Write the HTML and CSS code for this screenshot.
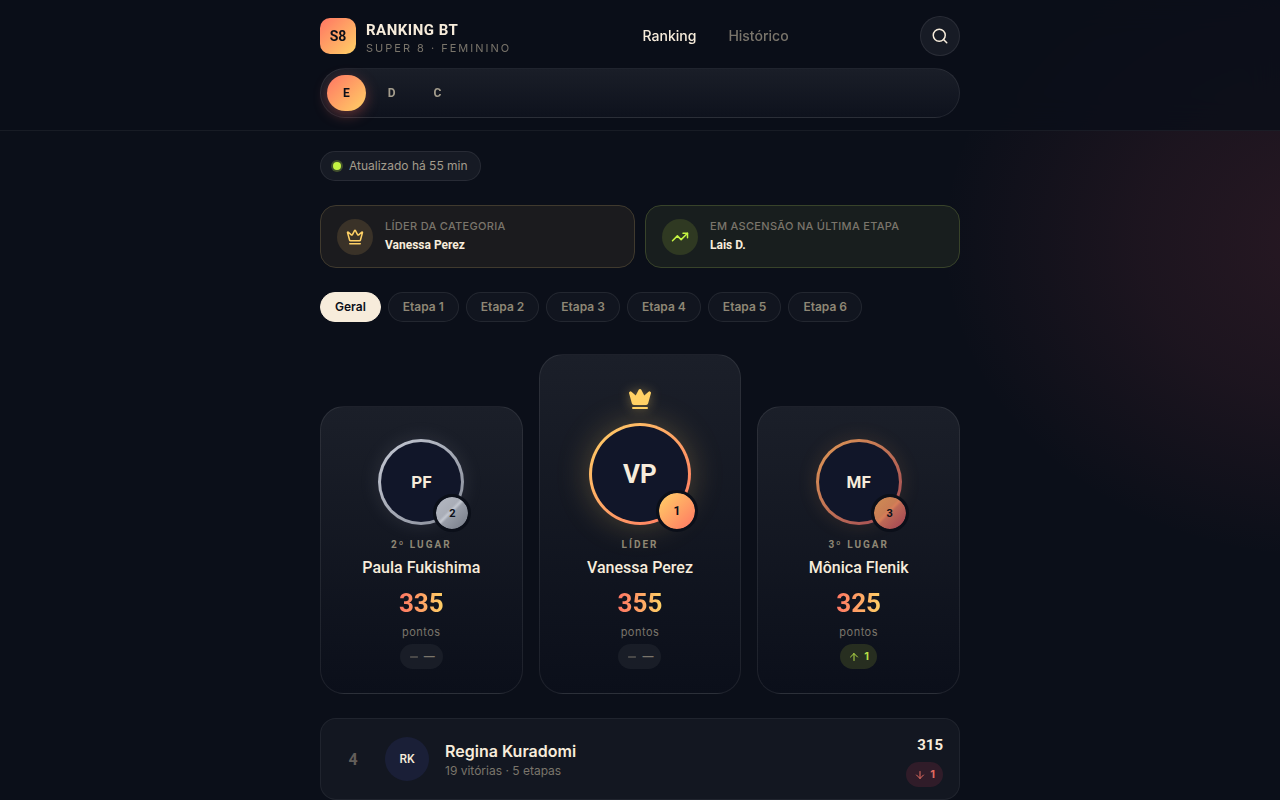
FILE: index.html
```html
<!DOCTYPE html>
<html lang="pt-BR">
<head>
    <meta charset="UTF-8">
    <meta name="viewport" content="width=device-width, initial-scale=1.0">
    <title>Ranking BT</title>
    <link rel="stylesheet" href="styles.css">
</head>
<body>
    <header class="header">
        <div class="container">
            <div class="topbar">
                <div class="brand">
                    <span class="logo">S8</span>
                    <div>
                        <div class="brand-name">RANKING BT</div>
                        <div class="brand-sub">SUPER 8 · FEMININO</div>
                    </div>
                </div>
                <nav class="nav">
                    <a href="#" class="active">Ranking</a>
                    <a href="#">Histórico</a>
                </nav>
                <button class="search" aria-label="Buscar">
                    <svg class="icon" width="18" height="18" viewBox="0 0 24 24"><circle cx="11" cy="11" r="8"/><path d="m21 21-4.3-4.3"/></svg>
                </button>
            </div>
            <div class="categories">
                <button class="active">E</button>
                <button>D</button>
                <button>C</button>
            </div>
        </div>
    </header>

    <main class="container main">
        <div class="updated"><span class="dot"></span>Atualizado há 55 min</div>

        <section class="highlights">
            <div class="highlight gold">
                <span class="highlight-icon">
                    <svg class="icon" width="18" height="18" viewBox="0 0 24 24"><path d="M11.562 3.266a.5.5 0 0 1 .876 0L15.39 8.87a1 1 0 0 0 1.516.294L21.183 5.5a.5.5 0 0 1 .798.519l-2.834 10.246a1 1 0 0 1-.956.734H5.81a1 1 0 0 1-.957-.734L2.02 6.02a.5.5 0 0 1 .798-.519l4.276 3.664a1 1 0 0 0 1.516-.294z"/><path d="M5 21h14"/></svg>
                </span>
                <div>
                    <div class="highlight-label">LÍDER DA CATEGORIA</div>
                    <div class="highlight-name">Vanessa Perez</div>
                </div>
            </div>
            <div class="highlight lime">
                <span class="highlight-icon">
                    <svg class="icon" width="18" height="18" viewBox="0 0 24 24"><path d="m22 7-8.5 8.5-5-5L2 17"/><path d="M16 7h6v6"/></svg>
                </span>
                <div>
                    <div class="highlight-label">EM ASCENSÃO NA ÚLTIMA ETAPA</div>
                    <div class="highlight-name">Lais D.</div>
                </div>
            </div>
        </section>

        <div class="stages">
            <button class="active">Geral</button>
            <button>Etapa 1</button>
            <button>Etapa 2</button>
            <button>Etapa 3</button>
            <button>Etapa 4</button>
            <button>Etapa 5</button>
            <button>Etapa 6</button>
        </div>

        <section class="podium">
            <article class="card second">
                <div class="avatar"><span class="initials">PF</span><span class="badge">2</span></div>
                <div class="place">2º LUGAR</div>
                <div class="name">Paula Fukishima</div>
                <div class="points">335</div>
                <div class="unit">pontos</div>
                <span class="delta"><svg class="icon" width="12" height="12" viewBox="0 0 24 24"><path d="M5 12h14"/></svg>—</span>
            </article>
            <article class="card first">
                <svg class="crown" width="24" height="24" viewBox="0 0 24 24"><path d="M11.562 3.266a.5.5 0 0 1 .876 0L15.39 8.87a1 1 0 0 0 1.516.294L21.183 5.5a.5.5 0 0 1 .798.519l-2.834 10.246a1 1 0 0 1-.956.734H5.81a1 1 0 0 1-.957-.734L2.02 6.02a.5.5 0 0 1 .798-.519l4.276 3.664a1 1 0 0 0 1.516-.294z"/><path d="M5 21h14"/></svg>
                <div class="avatar"><span class="initials">VP</span><span class="badge">1</span></div>
                <div class="place">LÍDER</div>
                <div class="name">Vanessa Perez</div>
                <div class="points">355</div>
                <div class="unit">pontos</div>
                <span class="delta"><svg class="icon" width="12" height="12" viewBox="0 0 24 24"><path d="M5 12h14"/></svg>—</span>
            </article>
            <article class="card third">
                <div class="avatar"><span class="initials">MF</span><span class="badge">3</span></div>
                <div class="place">3º LUGAR</div>
                <div class="name">Mônica Flenik</div>
                <div class="points">325</div>
                <div class="unit">pontos</div>
                <span class="delta up"><svg class="icon" width="12" height="12" viewBox="0 0 24 24"><path d="m5 12 7-7 7 7"/><path d="M12 19V5"/></svg>1</span>
            </article>
        </section>

        <section class="list">
            <article class="row">
                <span class="rank">4</span>
                <span class="row-avatar">RK</span>
                <div class="row-info">
                    <div class="row-name">Regina Kuradomi</div>
                    <div class="row-meta">19 vitórias · 5 etapas</div>
                </div>
                <div class="row-score">
                    <div class="score">315</div>
                    <span class="delta down"><svg class="icon" width="12" height="12" viewBox="0 0 24 24"><path d="M12 5v14"/><path d="m19 12-7 7-7-7"/></svg>1</span>
                </div>
            </article>
        </section>
    </main>
</body>
</html>
```
FILE: styles.css
```css
:root {
    --bg: #0b0f19;
    --cream: #f7ecdb;
    --text-2: #a39c8c;
    --text-3: #7a756b;
    --coral: #ff7563;
    --gold: #ffd166;
    --lime: #c5f442;
    --line: rgba(255, 255, 255, 0.08);
    --display: Roboto, "Liberation Sans", sans-serif;
}
* {
    box-sizing: border-box;
}
body {
    margin: 0;
    min-height: 100vh;
    font-family: Inter, "Liberation Sans", sans-serif;
    color: var(--cream);
    background: radial-gradient(ellipse 390px 320px at 104% 240px, rgba(230, 85, 100, 0.13), rgba(230, 85, 100, 0.08) 50%, transparent) var(--bg);
}
button {
    font-family: inherit;
    cursor: pointer;
}
.container {
    max-width: 672px;
    margin: 0 auto;
    padding: 0 16px;
}
.icon {
    fill: none;
    stroke: currentColor;
    stroke-width: 2;
    stroke-linecap: round;
    stroke-linejoin: round;
}

/* Header */
.header {
    position: sticky;
    top: 0;
    z-index: 10;
    padding: 16px 0 12px;
    background: rgba(10, 14, 25, 0.85);
    backdrop-filter: blur(16px);
    border-bottom: 1px solid rgba(255, 255, 255, 0.06);
}
.topbar {
    display: flex;
    align-items: center;
    justify-content: space-between;
    margin-bottom: 12px;
}
.brand {
    display: flex;
    align-items: center;
    gap: 10px;
}
.logo {
    display: grid;
    place-items: center;
    width: 36px;
    height: 36px;
    border-radius: 10px;
    background: linear-gradient(135deg, var(--coral), var(--gold));
    color: var(--bg);
    font: 700 14px var(--display);
}
.brand-name {
    padding-top: 4px;
    font: 700 15px/20px var(--display);
    letter-spacing: 0.5px;
}
.brand-sub {
    font-size: 11px;
    line-height: 16px;
    letter-spacing: 2px;
    color: var(--text-3);
}
.nav {
    display: flex;
    gap: 32px;
}
.nav a {
    font-size: 14px;
    font-weight: 500;
    line-height: 20px;
    color: var(--text-3);
    text-decoration: none;
}
.nav .active {
    color: var(--cream);
}
.search {
    display: grid;
    place-items: center;
    width: 40px;
    height: 40px;
    padding: 0;
    border: 1px solid var(--line);
    border-radius: 50%;
    background: #171b25;
    color: var(--cream);
}
.categories {
    display: flex;
    gap: 6px;
    padding: 6px;
    border: 1px solid var(--line);
    border-radius: 25px;
    background: linear-gradient(#1a1e28, #0e121d);
}
.categories button {
    height: 36px;
    padding: 0 16px;
    border: 0;
    border-radius: 18px;
    background: none;
    color: var(--text-2);
    font: 700 12px var(--display);
}
.categories .active {
    background: linear-gradient(135deg, var(--coral), var(--gold));
    color: var(--bg);
    box-shadow: 0 4px 14px rgba(255, 107, 91, 0.35);
}

/* Highlights */
.main {
    padding-top: 20px;
}
.updated {
    display: inline-flex;
    align-items: center;
    gap: 8px;
    height: 30px;
    padding: 0 12px;
    border: 1px solid var(--line);
    border-radius: 15px;
    background: #161a24;
    color: var(--text-2);
    font-size: 12px;
    line-height: 16px;
    vertical-align: top;
}
.dot {
    width: 8px;
    height: 8px;
    border-radius: 50%;
    background: var(--lime);
    box-shadow: 0 0 0 2px rgba(197, 244, 66, 0.25);
}
.highlights {
    display: grid;
    grid-template-columns: 1fr 1fr;
    gap: 10px;
    margin-top: 24px;
}
.highlight {
    display: flex;
    align-items: center;
    gap: 12px;
    padding: 12px 16px;
    border: 1px solid;
    border-radius: 16px;
}
.highlight-icon {
    display: grid;
    place-items: center;
    width: 36px;
    height: 36px;
    border-radius: 50%;
}
.highlight.gold {
    border-color: #403a2e;
    background: #1b1b1e;
}
.gold .highlight-icon {
    background: #3a3228;
    color: var(--gold);
}
.highlight.lime {
    border-color: #38432a;
    background: #181e1e;
}
.lime .highlight-icon {
    background: #2f3922;
    color: var(--lime);
}
.highlight-label {
    font-size: 11px;
    font-weight: 500;
    line-height: 17px;
    letter-spacing: 0.3px;
    color: var(--text-3);
}
.highlight-name {
    font: 700 12px/20px var(--display);
}

/* Stage filter */
.stages {
    display: flex;
    flex-wrap: wrap;
    gap: 7px;
    margin-top: 24px;
}
.stages button {
    height: 30px;
    padding: 0 14px;
    border: 1px solid var(--line);
    border-radius: 15px;
    background: #11151f;
    color: #8e8775;
    font-size: 12px;
    font-weight: 600;
    line-height: 16px;
}
.stages .active {
    border-color: var(--cream);
    background: var(--cream);
    color: var(--bg);
}

/* Podium */
.podium {
    display: grid;
    grid-template-columns: repeat(3, 1fr);
    align-items: end;
    gap: 16px;
    margin-top: 32px;
}
.card {
    display: flex;
    flex-direction: column;
    align-items: center;
    padding: 32px 16px 24px;
    border: 1px solid var(--line);
    border-radius: 24px;
    background: linear-gradient(#1b1f29, #0b0f1a);
    text-align: center;
}
.crown {
    margin-bottom: 12px;
    fill: var(--gold);
    stroke: var(--gold);
    stroke-width: 2;
    stroke-linecap: round;
    stroke-linejoin: round;
    filter: drop-shadow(0 0 6px rgba(255, 209, 102, 0.4));
}
.avatar {
    position: relative;
    width: 86px;
    height: 86px;
    padding: 3px;
    border-radius: 50%;
    background: var(--ring);
}
.initials {
    display: grid;
    place-items: center;
    height: 100%;
    border-radius: 50%;
    background: #111629;
    font: 700 17px var(--display);
}
.badge {
    position: absolute;
    right: -7px;
    bottom: -7px;
    display: grid;
    place-items: center;
    width: 38px;
    height: 38px;
    border: 3px solid var(--bg);
    border-radius: 50%;
    background: var(--medal) padding-box;
    color: var(--bg);
    font: 700 11px var(--display);
}
.first {
    --ring: linear-gradient(135deg, var(--gold), var(--coral));
    --medal: var(--ring);
}
.first .avatar {
    width: 102px;
    height: 102px;
    box-shadow: 0 0 32px rgba(255, 209, 102, 0.25);
}
.first .initials {
    font-size: 26px;
}
.first .badge {
    width: 42px;
    height: 42px;
    font-size: 12px;
}
.second {
    --ring: linear-gradient(135deg, #c5c9d4, #868b97);
    --medal: linear-gradient(135deg, #b4b8c2, #a9adb7 40%, #c4c8d1 46%, #989da8 52%, #747a86);
}
.second .avatar {
    box-shadow: 0 0 20px rgba(197, 201, 212, 0.12);
}
.third {
    --ring: linear-gradient(135deg, #e09a55, #9f4655);
    --medal: linear-gradient(135deg, #cf8d53, #c97d55 40%, #d77d58 46%, #bd6856 52%, #9f4053);
}
.third .avatar {
    box-shadow: 0 0 20px rgba(224, 154, 85, 0.14);
}
.place {
    margin-top: 12px;
    font: 700 10px/16px var(--display);
    letter-spacing: 2px;
    color: #8e8775;
}
.name {
    margin-top: 3px;
    font: 500 16px/24px var(--display);
}
.points {
    margin-top: 6px;
    font: 700 26px/34px var(--display);
    background: linear-gradient(90deg, var(--coral), var(--gold));
    -webkit-background-clip: text;
    background-clip: text;
    color: transparent;
}
.unit {
    margin-top: 4px;
    font-size: 11px;
    line-height: 17px;
    letter-spacing: 0.5px;
    color: var(--text-3);
}
.delta {
    display: inline-flex;
    align-items: center;
    gap: 4px;
    height: 25px;
    margin-top: 3px;
    padding: 0 8px;
    border-radius: 13px;
    background: #191d27;
    color: var(--text-3);
    font: 700 11px/15px Inter, "Liberation Sans", sans-serif;
}
.delta.up {
    background: #272e20;
    color: #b5dd46;
}
.delta.down {
    background: #301c29;
    color: #e26b60;
}

/* List */
.list {
    margin-top: 24px;
}
.row {
    display: flex;
    align-items: center;
    gap: 16px;
    padding: 12px 16px;
    border: 1px solid rgba(255, 255, 255, 0.06);
    border-radius: 16px;
    background: #131721;
}
.rank {
    width: 32px;
    text-align: center;
    font: 700 16px var(--display);
    color: #625e5a;
}
.row-avatar {
    display: grid;
    place-items: center;
    width: 44px;
    height: 44px;
    border-radius: 50%;
    background: #1a1f37;
    font: 500 12px var(--display);
}
.row-info {
    flex: 1;
}
.row-name {
    padding-top: 2px;
    font-size: 16px;
    font-weight: 600;
    line-height: 22px;
}
.row-meta {
    font-size: 12px;
    line-height: 18px;
    color: var(--text-3);
}
.row-score {
    display: flex;
    flex-direction: column;
    align-items: flex-end;
}
.score {
    font: 700 15px/28px var(--display);
}
```
